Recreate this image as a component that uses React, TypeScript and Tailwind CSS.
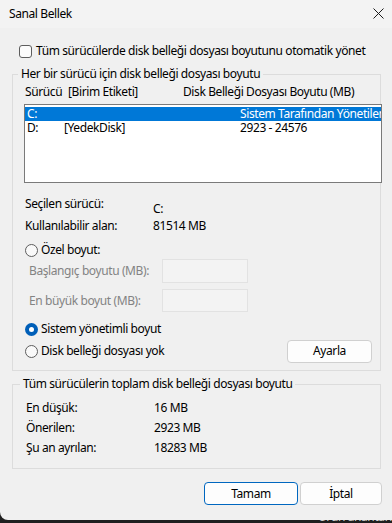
import type { ReactNode } from 'react'

const font = { fontFamily: '"Noto Sans", "Open Sans", Arial, sans-serif' }

function Radio({ checked = false }: { checked?: boolean }) {
  if (checked) {
    return (
      <span className="flex h-[13px] w-[13px] shrink-0 items-center justify-center rounded-full bg-[#005fb8]">
        <span className="h-[5px] w-[5px] rounded-full bg-white" />
      </span>
    )
  }
  return <span className="h-[13px] w-[13px] shrink-0 rounded-full border border-[#5d5d5d] bg-[#f9f9f9]" />
}

function Group({ title, className, children }: { title: string; className: string; children: ReactNode }) {
  return (
    <fieldset className={`w-[369px] min-w-0 border border-[#dcdcdc] ${className}`}>
      <legend className="-ml-[6px] px-[3px] leading-[16px]">{title}</legend>
      {children}
    </fieldset>
  )
}

function Btn({ label, primary = false, className = '' }: { label: string; primary?: boolean; className?: string }) {
  return (
    <button
      className={`flex h-[23px] items-center justify-center rounded-[4px] border bg-[#fdfdfd] leading-[16px] ${
        primary ? 'border-[#0067c0]' : 'border-[#d0d0d0]'
      } ${className}`}
    >
      {label}
    </button>
  )
}

export default function App() {
  return (
    <div
      className="h-[523px] w-[392px] overflow-hidden bg-[#1f1f1f] text-[12px] tracking-[-0.4px] text-black"
      style={font}
    >
      <div className="flex h-[520px] flex-col overflow-hidden rounded-bl-[8px] bg-[#f0f0f0]">
        {/* title bar */}
        <div className="flex h-[28px] items-center justify-between bg-[#f3f3f3] pl-[9px] pr-[8px]">
          <span className="leading-[16px]">Sanal Bellek</span>
          <svg width="11" height="11" viewBox="0 0 11 11" className="mb-[1px]">
            <path d="M0.5 0.5 L10.5 10.5 M10.5 0.5 L0.5 10.5" stroke="#1a1a1a" strokeWidth="1" />
          </svg>
        </div>

        <div className="flex flex-col pl-[12px]">
          <label className="ml-[7px] mt-[15px] flex h-[16px] items-center gap-[4px]">
            <span className="h-[13px] w-[13px] shrink-0 rounded-[3px] border border-[#5d5d5d] bg-[#fbfbfb]" />
            <span className="leading-[16px]">Tüm sürücülerde disk belleği dosyası boyutunu otomatik yönet</span>
          </label>

          <Group title="Her bir sürücü için disk belleği dosyası boyutu" className="mt-[7px] pb-[8px] pl-[11px]">
            <div className="ml-[1px] mt-[2px] flex h-[16px] items-center whitespace-nowrap leading-[16px]">
              <span className="w-[43px] shrink-0">Sürücü</span>
              <span className="w-[115px] shrink-0">[Birim Etiketi]</span>
              <span>Disk Belleği Dosyası Boyutu (MB)</span>
            </div>

            <div className="mt-[4px] h-[79px] w-[358px] overflow-hidden border border-[#7a7a7a] bg-white pt-[2px]">
              <div className="flex h-[14px] items-center whitespace-nowrap bg-[#0078d7] pl-[2px] leading-[14px] text-white">
                <span className="w-[37px] shrink-0">C:</span>
                <span className="w-[176px] shrink-0" />
                <span className="shrink-0">Sistem Tarafından Yönetilen</span>
              </div>
              <div className="flex h-[14px] items-center whitespace-nowrap pl-[2px] leading-[14px]">
                <span className="w-[37px] shrink-0">D:</span>
                <span className="w-[176px] shrink-0">[YedekDisk]</span>
                <span className="shrink-0">2923 - 24576</span>
              </div>
            </div>

            <div className="ml-[1px] mt-[13px] flex items-start leading-[16px]">
              <span className="w-[128px] shrink-0">Seçilen sürücü:</span>
              <span className="mt-[5px]">C:</span>
            </div>
            <div className="ml-[1px] mt-[1px] flex h-[16px] items-center leading-[16px]">
              <span className="w-[128px] shrink-0">Kullanılabilir alan:</span>
              <span>81514 MB</span>
            </div>

            <div className="ml-[1px] mt-[8px] flex h-[16px] items-center gap-[3px] leading-[16px]">
              <Radio />
              <span>Özel boyut:</span>
            </div>
            <div className="ml-[5px] mt-[1px] flex h-[24px] items-center leading-[16px] text-[#838383]">
              <span className="w-[133px] shrink-0">Başlangıç boyutu (MB):</span>
              <span className="h-[24px] w-[86px] border border-[#e2e2e2] bg-[#f3f3f3]" />
            </div>
            <div className="ml-[5px] mt-[6px] flex h-[23px] items-center leading-[16px] text-[#838383]">
              <span className="w-[133px] shrink-0">En büyük boyut (MB):</span>
              <span className="h-[23px] w-[86px] border border-[#e2e2e2] bg-[#f3f3f3]" />
            </div>

            <div className="ml-[1px] mt-[9px] flex h-[16px] items-center gap-[3px] leading-[16px]">
              <Radio checked />
              <span>Sistem yönetimli boyut</span>
            </div>
            <div className="ml-[1px] mt-[3px] flex h-[22px] items-center">
              <div className="flex items-center gap-[3px] leading-[16px]">
                <Radio />
                <span>Disk belleği dosyası yok</span>
              </div>
              <Btn label="Ayarla" className="ml-auto mr-[8px] h-[22px] w-[85px]" />
            </div>
          </Group>

          <Group title="Tüm sürücülerin toplam disk belleği dosyası boyutu" className="mt-[5px] pb-[12px] pl-[13px]">
            <div className="mt-[8px] flex flex-col gap-[4px] leading-[16px]">
              <div className="flex h-[16px] items-center">
                <span className="w-[128px] shrink-0">En düşük:</span>
                <span>16 MB</span>
              </div>
              <div className="flex h-[16px] items-center">
                <span className="w-[128px] shrink-0">Önerilen:</span>
                <span>2923 MB</span>
              </div>
              <div className="flex h-[16px] items-center">
                <span className="w-[128px] shrink-0">Şu an ayrılan:</span>
                <span>18283 MB</span>
              </div>
            </div>
          </Group>

          <div className="mt-[13px] flex">
            <Btn label="Tamam" primary className="ml-[192px] w-[94px]" />
            <Btn label="İptal" className="ml-[2px] w-[82px]" />
          </div>
        </div>
      </div>
      <div className="flex h-[3px] overflow-hidden pl-[318px] text-[12px] leading-[12px] text-[#d0d0d0]">
        <span className="-mt-[9px]">Ürün anahtarı</span>
      </div>
    </div>
  )
}
